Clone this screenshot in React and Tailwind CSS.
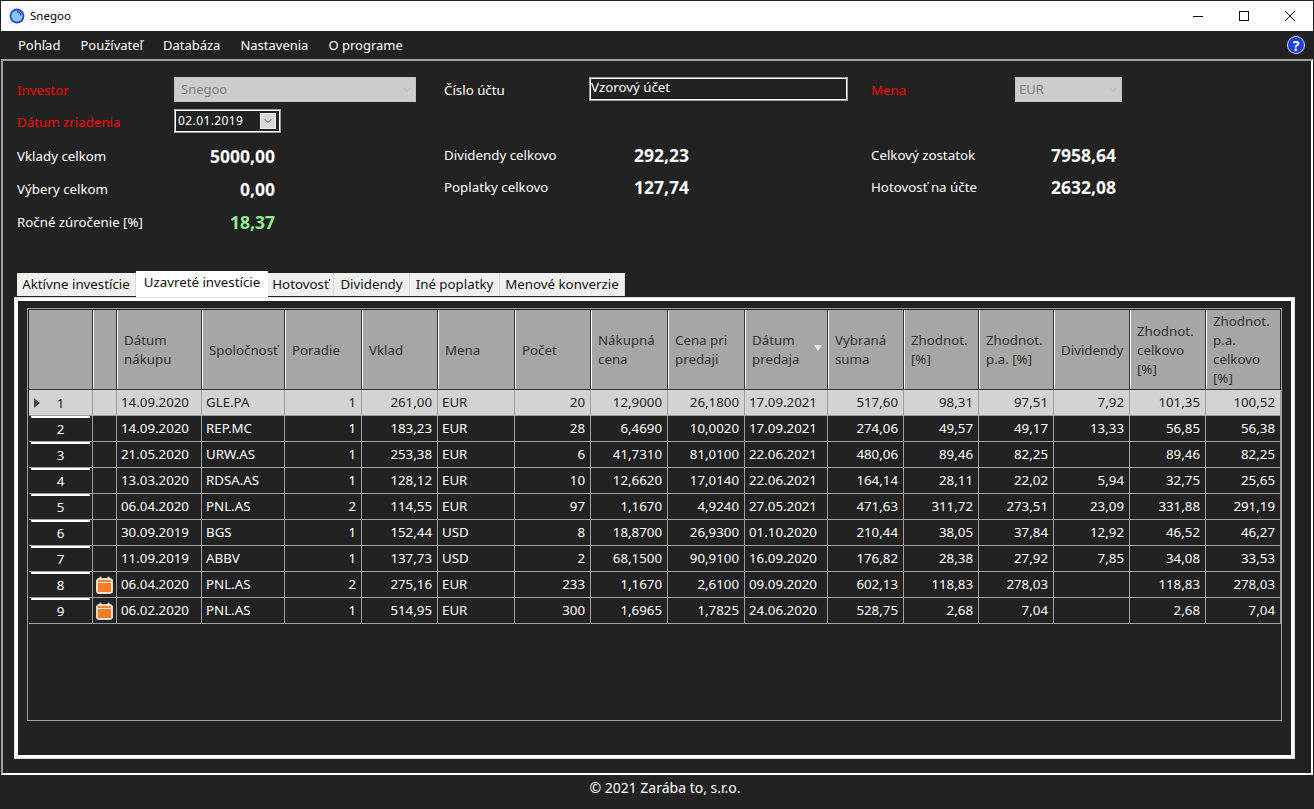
import { ChevronDown } from 'lucide-react';

const font = { fontFamily: '"Noto Sans", sans-serif' };

const cols = 'grid grid-cols-[64px_24px_85px_83px_77px_76px_77px_76px_77px_77px_83px_76px_75px_75px_76px_76px_75px]';

const headers = [
  '', '', 'Dátum nákupu', 'Spoločnosť', 'Poradie', 'Vklad', 'Mena', 'Počet', 'Nákupná cena', 'Cena pri predaji',
  'Dátum predaja', 'Vybraná suma', 'Zhodnot. [%]', 'Zhodnot. p.a. [%]', 'Dividendy', 'Zhodnot. celkovo [%]', 'Zhodnot. p.a. celkovo [%]',
];

const rows = [
  ['14.09.2020', 'GLE.PA', '1', '261,00', 'EUR', '20', '12,9000', '26,1800', '17.09.2021', '517,60', '98,31', '97,51', '7,92', '101,35', '100,52'],
  ['14.09.2020', 'REP.MC', '1', '183,23', 'EUR', '28', '6,4690', '10,0020', '17.09.2021', '274,06', '49,57', '49,17', '13,33', '56,85', '56,38'],
  ['21.05.2020', 'URW.AS', '1', '253,38', 'EUR', '6', '41,7310', '81,0100', '22.06.2021', '480,06', '89,46', '82,25', '', '89,46', '82,25'],
  ['13.03.2020', 'RDSA.AS', '1', '128,12', 'EUR', '10', '12,6620', '17,0140', '22.06.2021', '164,14', '28,11', '22,02', '5,94', '32,75', '25,65'],
  ['06.04.2020', 'PNL.AS', '2', '114,55', 'EUR', '97', '1,1670', '4,9240', '27.05.2021', '471,63', '311,72', '273,51', '23,09', '331,88', '291,19'],
  ['30.09.2019', 'BGS', '1', '152,44', 'USD', '8', '18,8700', '26,9300', '01.10.2020', '210,44', '38,05', '37,84', '12,92', '46,52', '46,27'],
  ['11.09.2019', 'ABBV', '1', '137,73', 'USD', '2', '68,1500', '90,9100', '16.09.2020', '176,82', '28,38', '27,92', '7,85', '34,08', '33,53'],
  ['06.04.2020', 'PNL.AS', '2', '275,16', 'EUR', '233', '1,1670', '2,6100', '09.09.2020', '602,13', '118,83', '278,03', '', '118,83', '278,03'],
  ['06.02.2020', 'PNL.AS', '1', '514,95', 'EUR', '300', '1,6965', '1,7825', '24.06.2020', '528,75', '2,68', '7,04', '', '2,68', '7,04'],
];

const leftCols = [0, 1, 4, 8];
const tabs = ['Aktívne investície', 'Uzavreté investície', 'Hotovosť', 'Dividendy', 'Iné poplatky', 'Menové konverzie'];
const tabWidths = ['w-[119px]', 'w-[132px]', 'w-[66px]', 'w-[76px]', 'w-[90px]', 'w-[125px]'];
const menu = ['Pohľad', 'Používateľ', 'Databáza', 'Nastavenia', 'O programe'];

function CalendarIcon() {
  return (
    <svg width="17" height="18" viewBox="0 0 17 18">
      <rect x="0.5" y="2.5" width="16" height="15" rx="2.5" fill="#f5e6dc" stroke="#e8d5c8" />
      <rect x="2" y="7" width="13" height="9" fill="#fb7d23" />
      <rect x="2" y="4" width="13" height="2" fill="#fb7d23" />
      <rect x="3.5" y="0.5" width="2" height="4" rx="1" fill="#f5e6dc" />
      <rect x="11.5" y="0.5" width="2" height="4" rx="1" fill="#f5e6dc" />
    </svg>
  );
}

function AppLogo() {
  return (
    <svg width="16" height="16" viewBox="0 0 16 16">
      <circle cx="8" cy="8" r="7.4" fill="#2349e8" />
      <circle cx="8" cy="8" r="5.6" fill="#8fc6fb" />
      <path d="M8 3.8a4.2 4.2 0 0 1 4 3.8" fill="none" stroke="#1c3dc8" strokeWidth="1.3" />
    </svg>
  );
}

function Stat({ label, value, labelW, valueW, green }) {
  return (
    <div className="flex items-center h-[33px]">
      <div className={`${labelW} text-[13.3px] text-white`}>{label}</div>
      <div className={`${valueW} text-right text-[17.5px] font-bold ${green ? 'text-[#90ee90]' : 'text-white'}`}>{value}</div>
    </div>
  );
}

function DisabledSelect({ value, w, pad }) {
  return (
    <div className={`${w} ${pad} h-[25px] bg-[#cccccc] border border-[#c4c4c4] flex items-center justify-between pr-[2px] text-[#808080] text-[13px]`}>
      <span>{value}</span>
      <ChevronDown size={12} strokeWidth={1} className="text-[#9a9a9a]" />
    </div>
  );
}

export default function App() {
  return (
    <div style={font} className="w-[1314px] h-[809px] bg-[#222222] flex flex-col overflow-hidden border-x border-t border-[#222222]">
      <div className="h-[30px] shrink-0 bg-white flex items-center">
        <div className="ml-[8px] mr-[5px]"><AppLogo /></div>
        <span className="text-[11.5px] text-black">Snegoo</span>
        <div className="ml-auto flex items-center text-black">
          <div className="w-[46px] flex justify-center">
            <svg width="10" height="10" viewBox="0 0 10 10"><path d="M0 5.5H10" stroke="#111111" fill="none" /></svg>
          </div>
          <div className="w-[46px] flex justify-center">
            <svg width="10" height="10" viewBox="0 0 10 10"><rect x="0.5" y="0.5" width="9" height="9" stroke="#111111" fill="none" /></svg>
          </div>
          <div className="w-[46px] flex justify-center">
            <svg width="10" height="10" viewBox="0 0 10 10"><path d="M0 0L10 10M10 0L0 10" stroke="#111111" fill="none" /></svg>
          </div>
        </div>
      </div>

      <div className="h-[28px] shrink-0 flex items-center pl-[17px] pr-[8px] pt-[2px] text-[13px] text-white">
        <div className="flex gap-5">
          {menu.map((m) => <span key={m}>{m}</span>)}
        </div>
        <div className="ml-auto -mt-[2px] w-[18px] h-[18px] rounded-full bg-[#1f3fd8] border border-[#c8d4f4] flex items-center justify-center text-white text-[14px] font-bold">?</div>
      </div>

      <div className="h-[716px] shrink-0 border-2 border-[#a0a0a0] border-r-white border-b-white pl-[14px] pr-[16px] pt-[16px]">
        <div className="flex h-[194px]">
          <div className="w-[427px] shrink-0">
            <div className="flex items-center h-[25px]">
              <div className="w-[157px] pt-[2px] text-[13.3px] text-[#ff0000]">Investor</div>
              <DisabledSelect value="Snegoo" w="w-[242px]" pad="pl-[6px]" />
            </div>
            <div className="flex items-center h-[24px] mt-[7px]">
              <div className="w-[157px] pt-[4px] text-[13.3px] text-[#ff0000]">Dátum zriadenia</div>
              <div className="ml-[1px] w-[105px] h-[22px] border border-white outline outline-[#a0a0a0] flex items-center justify-between pl-[2px] pr-[3px] text-[12px] text-white tracking-[0.4px]">
                <span>02.01.2019</span>
                <div className="w-[16px] h-[16px] bg-[#d8d8d8] border border-[#f0f0f0] flex items-center justify-center text-[#222222]"><ChevronDown size={12} strokeWidth={1.5} /></div>
              </div>
            </div>
            <div className="mt-[7px]">
              <Stat label="Vklady celkom" value="5000,00" labelW="w-[157px]" valueW="w-[101px]" />
              <Stat label="Výbery celkom" value="0,00" labelW="w-[157px]" valueW="w-[101px]" />
              <Stat label="Ročné zúročenie [%]" value="18,37" labelW="w-[157px]" valueW="w-[101px]" green />
            </div>
          </div>
          <div className="w-[427px] shrink-0">
            <div className="flex items-center h-[25px]">
              <div className="w-[145px] pt-[2px] text-[13.3px] text-white">Číslo účtu</div>
              <div className="ml-[1px] -mt-[1px] w-[257px] h-[22px] border border-white outline outline-[#a0a0a0] flex items-center pb-[2px] text-[13.3px] text-white">Vzorový účet</div>
            </div>
            <div className="mt-[37px]">
              <Stat label="Dividendy celkovo" value="292,23" labelW="w-[145px]" valueW="w-[100px]" />
              <div className="-mt-[1px]"><Stat label="Poplatky celkovo" value="127,74" labelW="w-[145px]" valueW="w-[100px]" /></div>
            </div>
          </div>
          <div className="w-[300px] shrink-0">
            <div className="flex items-center h-[25px]">
              <div className="w-[144px] pt-[2px] text-[13.3px] text-[#ff0000]">Mena</div>
              <DisabledSelect value="EUR" w="w-[107px]" pad="pl-[3px]" />
            </div>
            <div className="mt-[37px]">
              <Stat label="Celkový zostatok" value="7958,64" labelW="w-[144px]" valueW="w-[101px]" />
              <div className="-mt-[1px]"><Stat label="Hotovosť na účte" value="2632,08" labelW="w-[144px]" valueW="w-[101px]" /></div>
            </div>
          </div>
        </div>

        <div className="flex items-end h-[26px]">
          {tabs.map((t, i) => (
            <div
              key={t}
              className={`${tabWidths[i]} flex items-center justify-center text-[13.3px] text-[#111111] ${i === 1 ? 'h-[26px] bg-white pb-[2px]' : 'h-[23px] mb-[1px] pt-[1px] bg-[#f0f0f0] border-r border-[#d9d9d9]'}`}
            >
              {t}
            </div>
          ))}
        </div>

        <div className="w-[1279px] h-[460px] -ml-[2px] mt-[1px] border-[3px] border-white outline outline-[#e0e0e0] pl-[9px] pt-[7px]">
          <div className="w-[1255px] h-[413px] border border-[#a0a0a0] p-[1px]">
            <div className={`${cols} h-[80px] bg-[#a6a6a6] border-b border-[#333333]`}>
              {headers.map((h, i) => (
                <div key={i} className={`relative flex items-center pl-[6px] pr-[2px] pt-[1px] text-[13.3px] leading-[19px] text-[#333333] ${i > 0 ? 'border-l border-l-white' : ''} ${i < headers.length - 1 ? 'border-r border-r-[#333333]' : ''}`}>
                  <span>{h}</span>
                  {i === 10 && <span className="absolute right-[5px] top-[35px] w-0 h-0 border-x-[4px] border-x-transparent border-t-[6px] border-t-[#e8e8e8]" />}
                </div>
              ))}
            </div>
            {rows.map((r, ri) => {
              const sel = ri === 0;
              return (
                <div key={ri} className={`${cols} h-[26px] ${sel ? 'bg-[#d3d3d3] text-[#222222]' : 'bg-[#222222] text-white'}`}>
                  <div className="relative flex items-center justify-center border-r border-b border-[#a0a0a0] text-[13.3px] pt-[2px]">
                    {!sel && <span className="absolute left-[2px] right-[2px] top-0 h-[2px] bg-white" />}
                    {sel && <span className="absolute left-[5px] top-[8px] w-0 h-0 border-y-[5px] border-y-transparent border-l-[6px] border-l-[#444444]" />}
                    {ri + 1}
                  </div>
                  <div className="flex items-center justify-center border-r border-b border-[#a0a0a0]">
                    {ri >= 7 && <CalendarIcon />}
                  </div>
                  {r.map((c, ci) => (
                    <div key={ci} className={`flex items-center border-r border-b border-[#a0a0a0] text-[13.3px] pl-[4px] pr-[5px] ${leftCols.includes(ci) ? 'justify-start' : 'justify-end'}`}>
                      {c}
                    </div>
                  ))}
                </div>
              );
            })}
          </div>
        </div>
      </div>

      <div className="flex-1 flex items-center justify-center pl-[16px] pb-[10px] text-[14px] text-white">© 2021 Zarába to, s.r.o.</div>
    </div>
  );
}
